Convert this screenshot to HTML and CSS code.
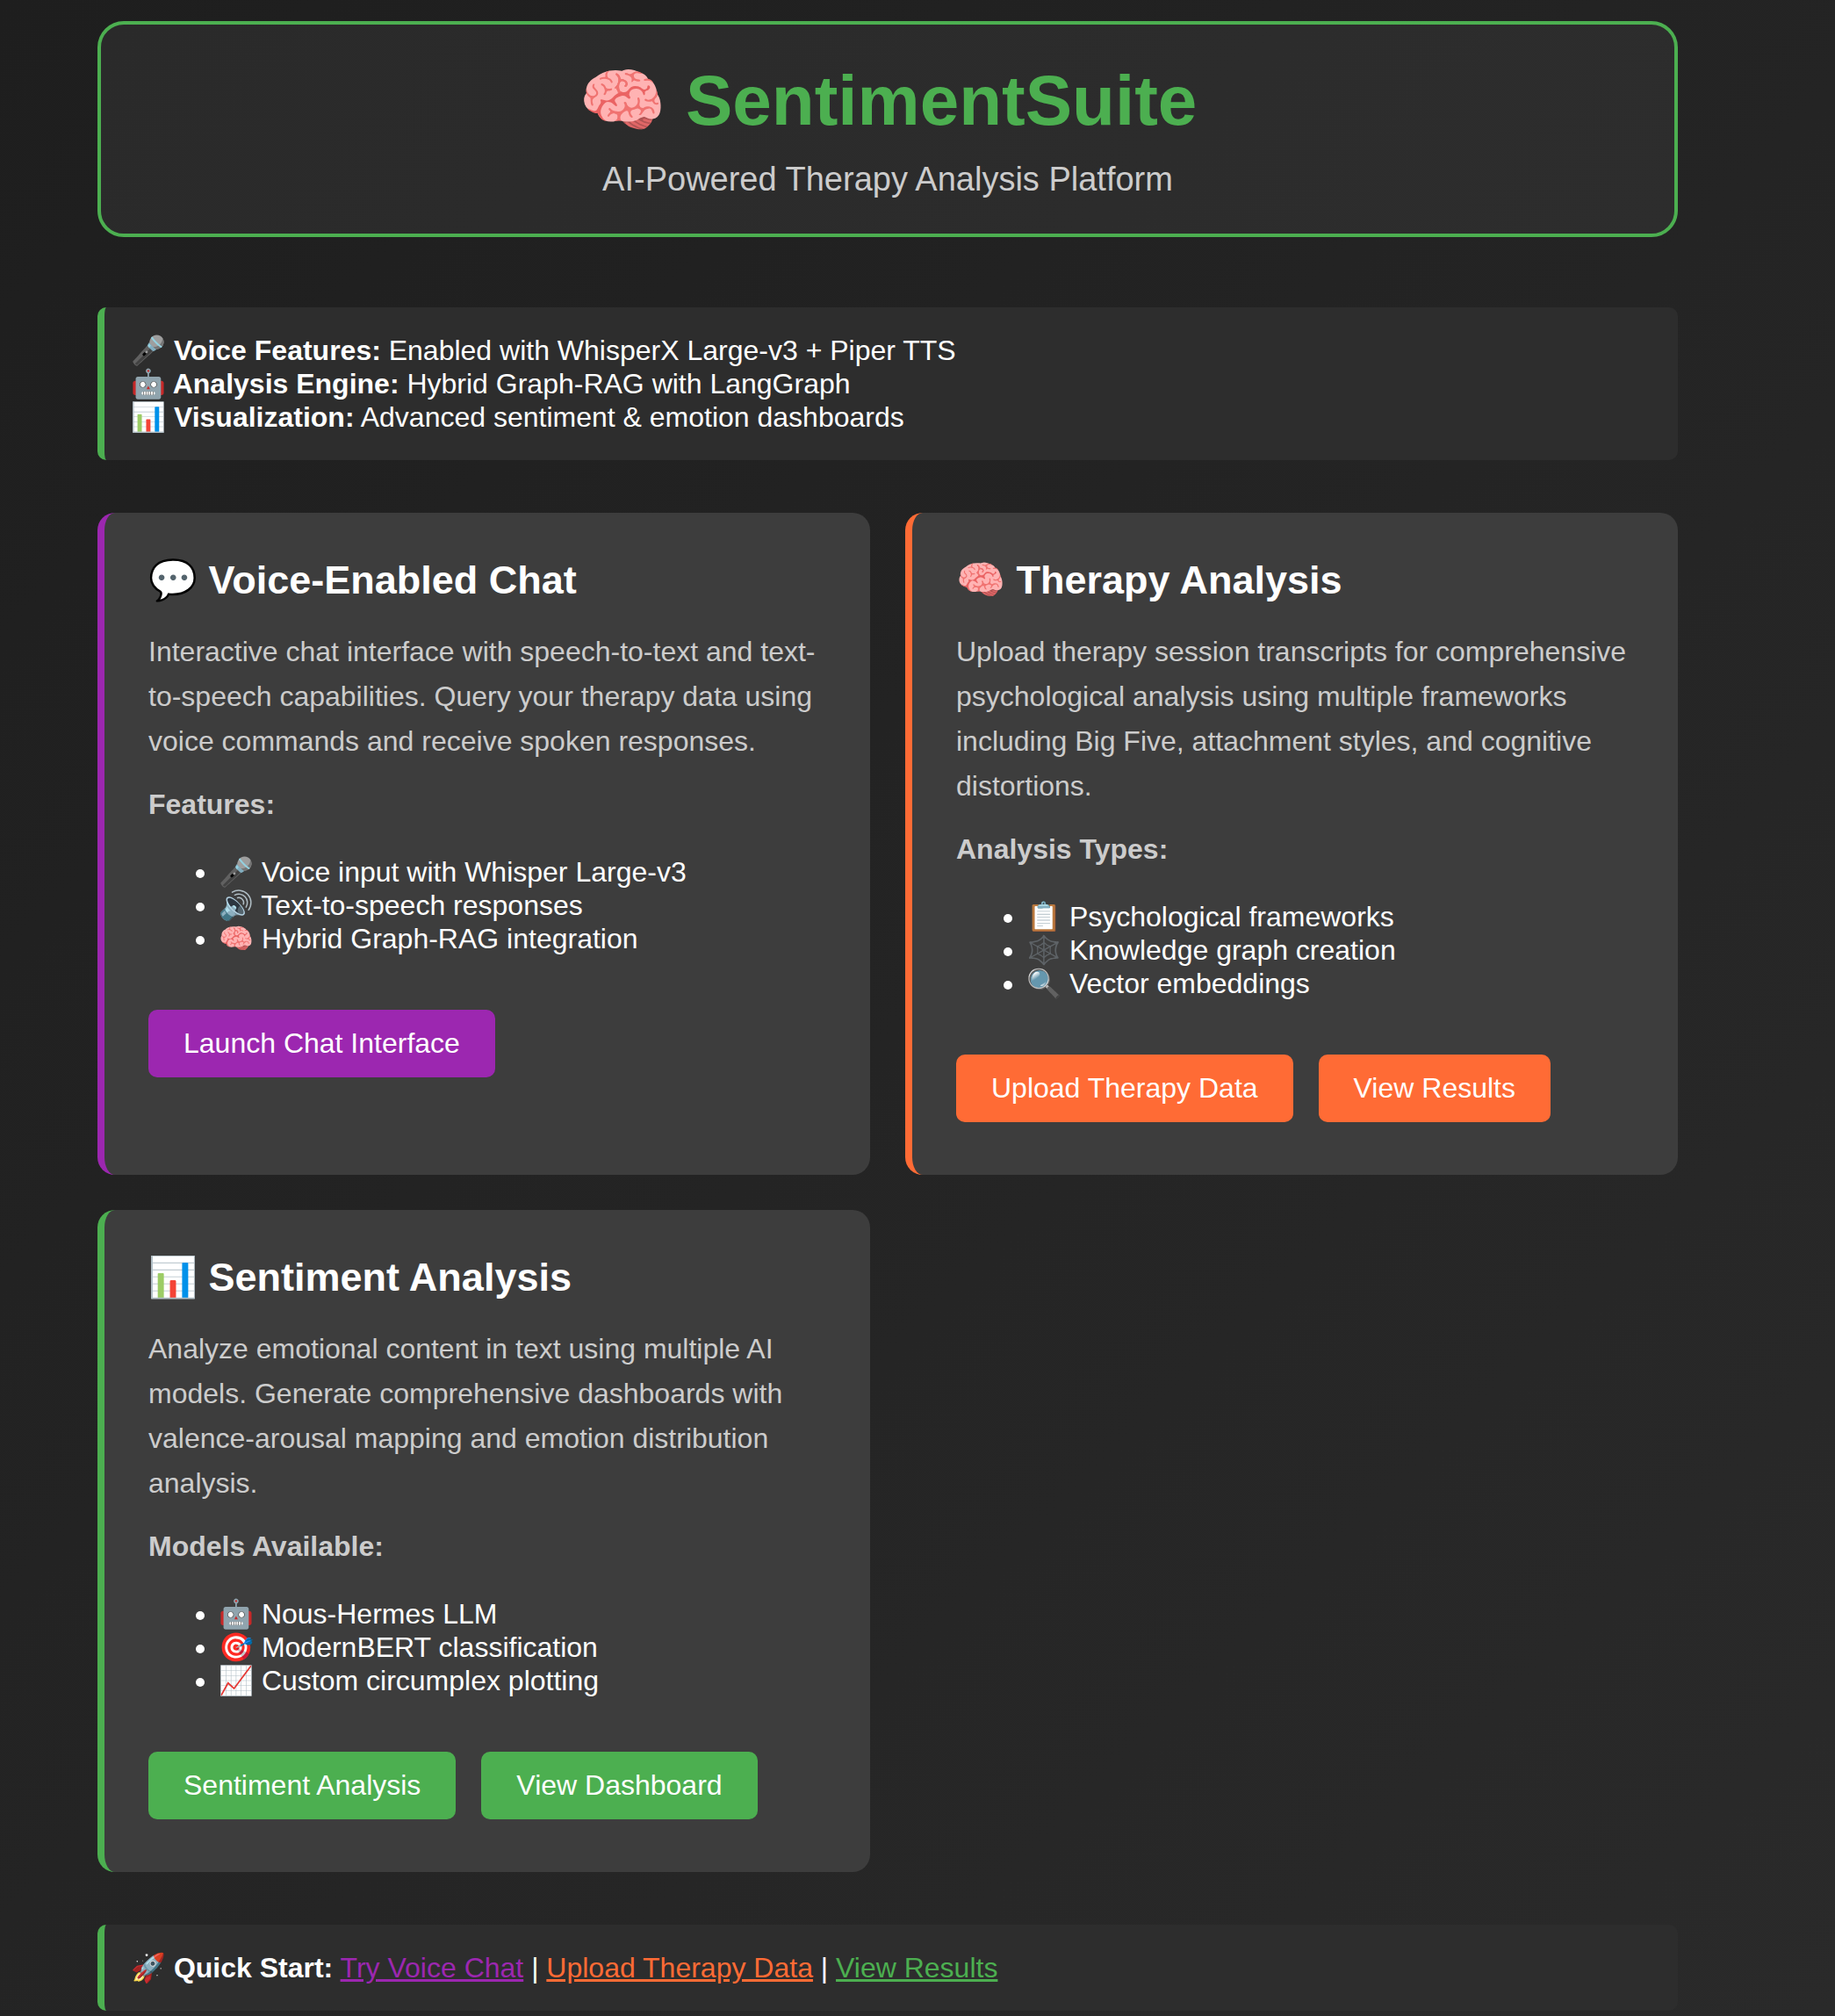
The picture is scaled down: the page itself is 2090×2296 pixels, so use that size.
FILE: index.html
```html
<!DOCTYPE html>
<html lang="en">
<head>
<meta charset="utf-8">
<meta name="viewport" content="width=device-width, initial-scale=1">
<title>SentimentSuite</title>
<link rel="stylesheet" href="styles.css">
</head>
<body>
<div class="container">
  <header class="header">
    <h1 class="header-title">🧠 SentimentSuite</h1>
    <p class="header-subtitle">AI-Powered Therapy Analysis Platform</p>
  </header>

  <section class="status">
    <div><strong>🎤 Voice Features:</strong> Enabled with WhisperX Large-v3 + Piper TTS</div>
    <div><strong>🤖 Analysis Engine:</strong> Hybrid Graph-RAG with LangGraph</div>
    <div><strong>📊 Visualization:</strong> Advanced sentiment &amp; emotion dashboards</div>
  </section>

  <main class="cards">
    <article class="card card-chat">
      <h2 class="card-title">💬 Voice-Enabled Chat</h2>
      <p class="card-text">Interactive chat interface with speech-to-text and text-to-speech capabilities. Query your therapy data using voice commands and receive spoken responses.</p>
      <p class="card-text"><strong>Features:</strong></p>
      <ul class="card-list">
        <li>🎤 Voice input with Whisper Large-v3</li>
        <li>🔊 Text-to-speech responses</li>
        <li>🧠 Hybrid Graph-RAG integration</li>
      </ul>
      <div class="actions">
        <button class="btn" type="button">Launch Chat Interface</button>
      </div>
    </article>

    <article class="card card-therapy">
      <h2 class="card-title">🧠 Therapy Analysis</h2>
      <p class="card-text">Upload therapy session transcripts for comprehensive psychological analysis using multiple frameworks including Big Five, attachment styles, and cognitive distortions.</p>
      <p class="card-text"><strong>Analysis Types:</strong></p>
      <ul class="card-list">
        <li>📋 Psychological frameworks</li>
        <li>🕸️ Knowledge graph creation</li>
        <li>🔍 Vector embeddings</li>
      </ul>
      <div class="actions">
        <button class="btn" type="button">Upload Therapy Data</button>
        <button class="btn" type="button">View Results</button>
      </div>
    </article>

    <article class="card card-sentiment">
      <h2 class="card-title">📊 Sentiment Analysis</h2>
      <p class="card-text">Analyze emotional content in text using multiple AI models. Generate comprehensive dashboards with valence-arousal mapping and emotion distribution analysis.</p>
      <p class="card-text"><strong>Models Available:</strong></p>
      <ul class="card-list">
        <li>🤖 Nous-Hermes LLM</li>
        <li>🎯 ModernBERT classification</li>
        <li>📈 Custom circumplex plotting</li>
      </ul>
      <div class="actions">
        <button class="btn" type="button">Sentiment Analysis</button>
        <button class="btn" type="button">View Dashboard</button>
      </div>
    </article>
  </main>

  <nav class="status" aria-label="Quick start">
    <strong>🚀 Quick Start:</strong>
    <a class="link-chat" href="#chat">Try Voice Chat</a> |
    <a class="link-therapy" href="#upload">Upload Therapy Data</a> |
    <a class="link-sentiment" href="#results">View Results</a>
  </nav>
</div>
</body>
</html>
```
FILE: styles.css
```css
:root {
  --green: #4caf50;
  --purple: #9c27b0;
  --orange: #ff6b35;
}

* {
  box-sizing: border-box;
}

body {
  margin: 0;
  padding: 24px 68px 6px 0;
  min-height: 100vh;
  background: linear-gradient(135deg, #1e1e1e, #2a2a2a);
  color: #fff;
  font-family: "Liberation Sans", Arial, sans-serif;
  font-size: 32px;
  line-height: 38px;
}

.container {
  display: flex;
  flex-direction: column;
  gap: 60px;
  max-width: 1800px;
  margin: 0 auto;
}

.header {
  margin-bottom: 20px;
  padding: 40px;
  border: 4px solid var(--green);
  border-radius: 30px;
  background: linear-gradient(135deg, #2a2a2a, #2d2d2d);
  text-align: center;
}

.header-title {
  margin: 0 0 20px;
  color: var(--green);
  font-size: 80px;
  line-height: 94px;
}

.header-subtitle {
  margin: 0;
  color: #ccc;
  font-size: 38px;
  line-height: 44px;
}

.status {
  padding: 30px;
  border-left: 8px solid var(--green);
  border-radius: 10px;
  background: #2d2d2d;
}

.cards {
  display: grid;
  grid-template-columns: repeat(2, minmax(0, 1fr));
  gap: 40px;
}

.card {
  padding: 50px 50px 60px;
  border-left: 8px solid var(--accent);
  border-radius: 20px;
  background: #3d3d3d;
}

.card-chat {
  --accent: var(--purple);
}

.card-therapy {
  --accent: var(--orange);
}

.card-sentiment {
  --accent: var(--green);
}

.card-title {
  margin: 0 0 30px;
  font-size: 45px;
  line-height: 53px;
}

.card-text {
  margin: 0 0 21px;
  color: #ccc;
  line-height: 51px;
}

.card-list {
  margin: 32px 0 62px;
  padding-left: 80px;
}

.actions {
  display: flex;
  flex-wrap: wrap;
  gap: 29px;
}

.btn {
  padding: 20px 40px;
  border: 0;
  border-radius: 10px;
  background: var(--accent);
  color: #fff;
  font: inherit;
  line-height: 37px;
  cursor: pointer;
}

.link-chat {
  color: var(--purple);
}

.link-therapy {
  color: var(--orange);
}

.link-sentiment {
  color: var(--green);
}
```
